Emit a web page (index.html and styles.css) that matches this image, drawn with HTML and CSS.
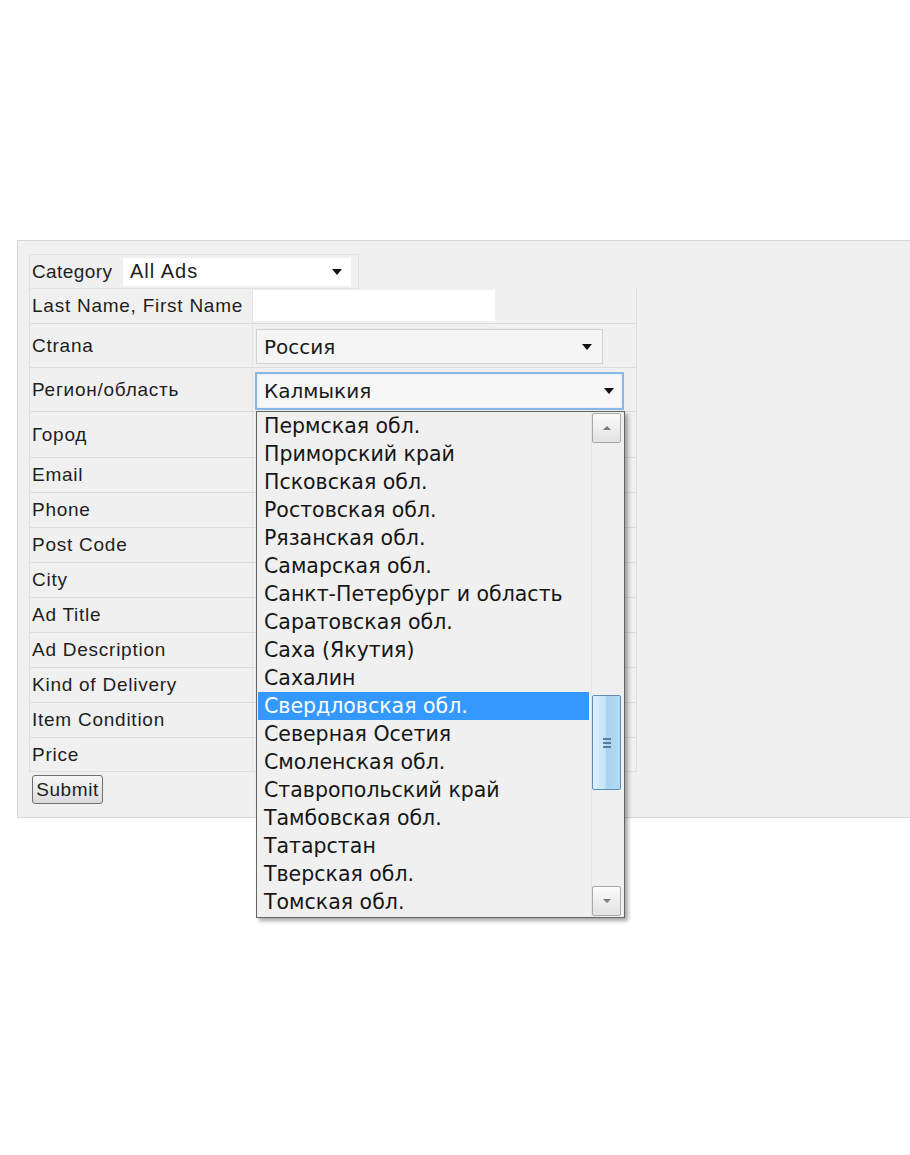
FILE: index.html
```html
<!DOCTYPE html>
<html>
<head>
<meta charset="utf-8">
<link rel="stylesheet" href="styles.css">
</head>
<body>
<div class="page">
  <div class="panel">
    <div class="cat-table">
      <span class="cat-label">Category</span>
      <div class="cat-select"><span>All Ads</span><span class="arrow"></span></div>
    </div>
    <div class="form-table">
      <div class="row h-name"><div class="lab">Last Name, First Name</div><div class="field"><div class="text-input"></div></div></div>
      <div class="row h-sel"><div class="lab">Ctrana</div><div class="field"><div class="sel sel-country"><span>Россия</span><span class="arrow"></span></div></div></div>
      <div class="row h-sel"><div class="lab">Регион/область</div><div class="field field-region">
        <div class="sel sel-region"><span>Калмыкия</span><span class="arrow"></span></div>
        <div class="dropdown">
          <ul class="options">
            <li>Пермская обл.</li>
            <li>Приморский край</li>
            <li>Псковская обл.</li>
            <li>Ростовская обл.</li>
            <li>Рязанская обл.</li>
            <li>Самарская обл.</li>
            <li>Санкт-Петербург и область</li>
            <li>Саратовская обл.</li>
            <li>Саха (Якутия)</li>
            <li>Сахалин</li>
            <li class="selected">Свердловская обл.</li>
            <li>Северная Осетия</li>
            <li>Смоленская обл.</li>
            <li>Ставропольский край</li>
            <li>Тамбовская обл.</li>
            <li>Татарстан</li>
            <li>Тверская обл.</li>
            <li>Томская обл.</li>
          </ul>
          <div class="scrollbar">
            <div class="sb-btn sb-up"><span class="tri-up"></span></div>
            <div class="sb-track">
              <div class="sb-thumb"><span class="grip"></span><span class="grip"></span><span class="grip"></span></div>
            </div>
            <div class="sb-btn sb-down"><span class="tri-down"></span></div>
          </div>
        </div>
      </div></div>
      <div class="row h-city"><div class="lab">Город</div><div class="field"></div></div>
      <div class="row"><div class="lab">Email</div><div class="field"></div></div>
      <div class="row"><div class="lab">Phone</div><div class="field"></div></div>
      <div class="row"><div class="lab">Post Code</div><div class="field"></div></div>
      <div class="row"><div class="lab">City</div><div class="field"></div></div>
      <div class="row"><div class="lab">Ad Title</div><div class="field"></div></div>
      <div class="row"><div class="lab">Ad Description</div><div class="field"></div></div>
      <div class="row"><div class="lab">Kind of Delivery</div><div class="field"></div></div>
      <div class="row"><div class="lab">Item Condition</div><div class="field"></div></div>
      <div class="row"><div class="lab">Price</div><div class="field"></div></div>
    </div>
    <button class="submit">Submit</button>
  </div>
</div>
</body>
</html>
```
FILE: styles.css
```css
html, body {
  margin: 0;
  padding: 0;
  background: #ffffff;
}
body {
  font-family: "Liberation Sans", Arial, sans-serif;
  color: #1e1e1e;
  width: 910px;
  height: 1155px;
  overflow: hidden;
}
.page {
  padding: 240px 0 0 17px;
}
.panel {
  box-sizing: border-box;
  height: 578px;
  width: 900px;
  background: #f0f0f0;
  border: 1px solid #d6d6d6;
  border-right: none;
  padding: 13px 0 0 11px;
}
.cat-table {
  box-sizing: border-box;
  width: 330px;
  height: 35px;
  border: 1px solid #e2e2e2;
  display: flex;
  align-items: center;
  padding-left: 2px;
}
.cat-label {
  font-size: 19px;
  width: 91px;
  letter-spacing: 0.4px;
}
.cat-select {
  box-sizing: border-box;
  width: 228px;
  height: 28px;
  background: #ffffff;
  display: flex;
  align-items: center;
  justify-content: space-between;
  padding: 0 9px 0 7px;
  font-size: 20px;
  letter-spacing: 1px;
}
.arrow {
  width: 0;
  height: 0;
  border-left: 5px solid transparent;
  border-right: 5px solid transparent;
  border-top: 6px solid #111;
}
.form-table {
  box-sizing: border-box;
  width: 608px;
  border: 1px solid #dedede;
  border-top: none;
}
.row {
  box-sizing: border-box;
  height: 35px;
  display: grid;
  grid-template-columns: 223px 1fr;
  border-bottom: 1px solid #dcdcdc;
}
.row:last-child {
  border-bottom: none;
  height: 33px;
}
.h-name { height: 35px; }
.h-sel { height: 44px; }
.h-city { height: 46px; }
.lab {
  display: flex;
  align-items: center;
  padding-left: 2px;
  font-size: 19px;
  letter-spacing: 0.75px;
  border-right: 1px solid #e4e4e4;
  white-space: nowrap;
}
.field {
  position: relative;
}
.text-input {
  width: 242px;
  height: 31px;
  margin-top: 1px;
  background: #ffffff;
}
.sel {
  box-sizing: border-box;
  display: flex;
  align-items: center;
  justify-content: space-between;
  font-family: "DejaVu Sans", sans-serif;
  font-size: 20px;
  color: #1a1a1a;
}
.sel-country {
  width: 347px;
  height: 35px;
  margin: 5px 0 0 3px;
  background: #f5f5f5;
  border: 1px solid #d2d2d2;
  padding: 0 10px 0 7px;
}
.sel-region {
  width: 369px;
  height: 38px;
  margin: 4px 0 0 2px;
  background: #f7f7f7;
  border: 2px solid #8ab8e6;
  box-shadow: inset 0 0 2px #c7ddf4;
  padding: 0 8px 0 7px;
}
.dropdown {
  position: absolute;
  left: 3px;
  top: 43px;
  width: 369px;
  height: 507px;
  box-sizing: border-box;
  background: #f0f0f0;
  border: 1px solid #646464;
  box-shadow: 3px 3px 4px rgba(0,0,0,0.35);
  display: flex;
  z-index: 5;
}
.options {
  list-style: none;
  margin: 0;
  padding: 0 0 0 1px;
  flex: 1;
  font-family: "DejaVu Sans", sans-serif;
  font-size: 20.5px;
  color: #161616;
}
.options li {
  height: 28px;
  line-height: 28px;
  padding-left: 6px;
  white-space: nowrap;
}
.options li.selected {
  background: #3399ff;
  color: #ffffff;
  margin-right: 2px;
}
.scrollbar {
  width: 29px;
  margin: 1px 3px 1px 0;
  display: flex;
  flex-direction: column;
  border-left: 1px solid #e6e6e6;
}
.sb-btn {
  box-sizing: border-box;
  height: 30px;
  border: 1px solid #a8a8a8;
  border-radius: 2px;
  background: linear-gradient(#fbfbfb, #e2e2e2);
  display: flex;
  align-items: center;
  justify-content: center;
}
.tri-up {
  width: 0; height: 0;
  border-left: 4px solid transparent;
  border-right: 4px solid transparent;
  border-bottom: 4px solid #7a7a7a;
}
.tri-down {
  width: 0; height: 0;
  border-left: 4px solid transparent;
  border-right: 4px solid transparent;
  border-top: 4px solid #7a7a7a;
}
.sb-track {
  flex: 1;
  padding-top: 252px;
}
.sb-thumb {
  box-sizing: border-box;
  height: 95px;
  border: 1px solid #5d8cb8;
  border-radius: 2px;
  background: linear-gradient(to right, #dff0fc 0%, #c4e2f7 45%, #a9d3f2 50%, #b4daf4 100%);
  display: flex;
  flex-direction: column;
  align-items: center;
  justify-content: center;
  gap: 2px;
}
.grip {
  display: block;
  width: 8px;
  height: 2px;
  background: #5a7ea0;
}
.submit {
  box-sizing: border-box;
  margin: 3px 0 0 3px;
  width: 71px;
  height: 29px;
  padding: 0;
  font-family: "Liberation Sans", Arial, sans-serif;
  font-size: 19px;
  letter-spacing: 0.6px;
  color: #1e1e1e;
  background: linear-gradient(#f6f6f6, #dcdcdc);
  border: 1px solid #707070;
  border-radius: 3px;
}
```
